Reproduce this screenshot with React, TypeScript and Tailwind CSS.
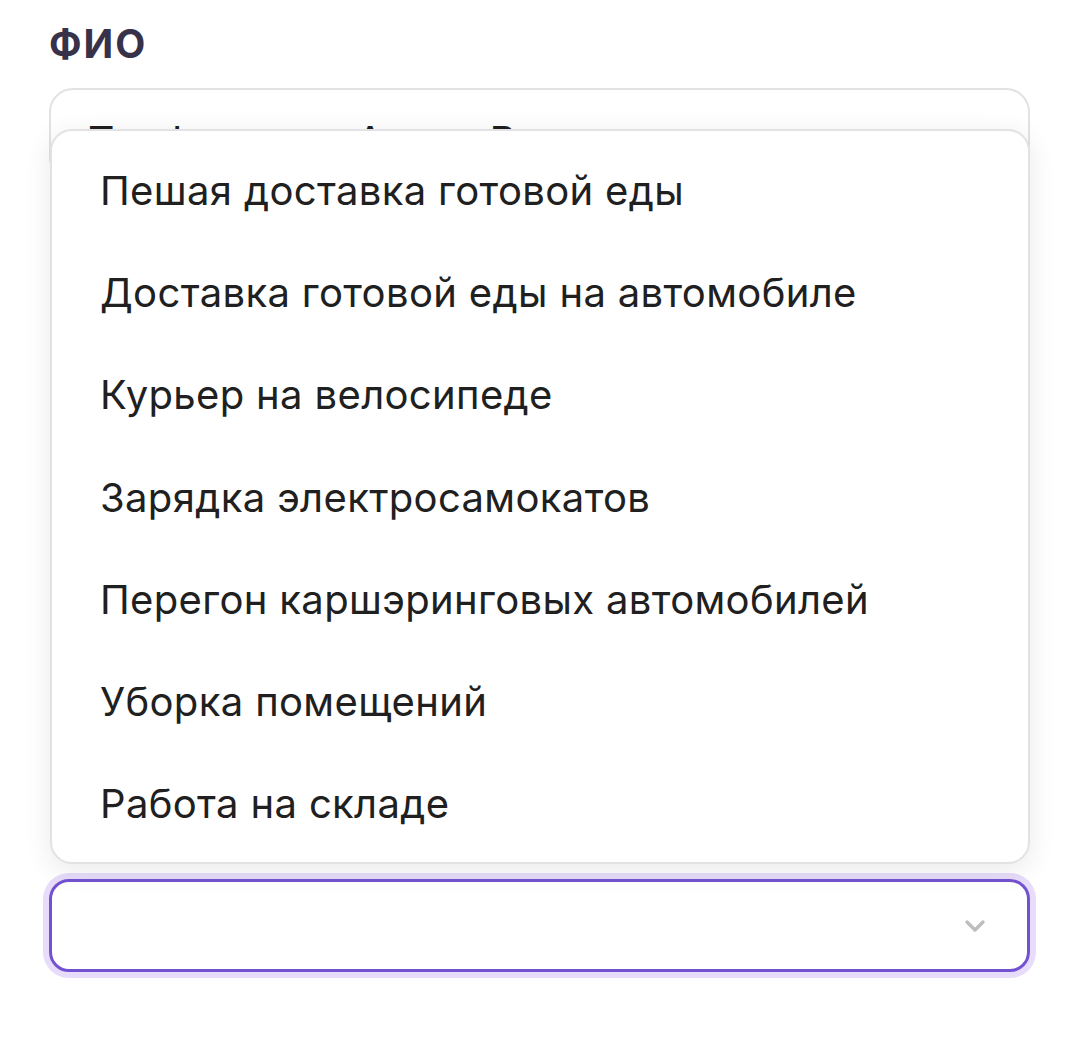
import { ChevronDown } from "lucide-react";

const options = [
  "Пешая доставка готовой еды",
  "Доставка готовой еды на автомобиле",
  "Курьер на велосипеде",
  "Зарядка электросамокатов",
  "Перегон каршэринговых автомобилей",
  "Уборка помещений",
  "Работа на складе",
];

export default function App() {
  return (
    <div className="min-h-[1045px] w-[1080px] bg-white font-['Inter',sans-serif]">
      <div className="relative flex flex-col px-[49px] pr-[50px] pt-[22px]">
        <label className="text-[39px] font-bold leading-[44px] tracking-[2px] text-[#37314a]">ФИО</label>

        <div className="mt-[22px] flex h-[93px] items-center rounded-[24px] border-2 border-[#e2e2e4] px-[37px]">
          <span className="mt-[14px] text-[41px] tracking-[0.4px] text-[#1f1f1f]">Трофименко Антон Владимирович</span>
        </div>

        {/* fields hidden beneath the open menu */}
        <div className="h-[698px]" />

        <div className="flex h-[93px] items-center justify-end rounded-[20px] border-[3px] border-[#7352d1] pr-[36px] shadow-[0_0_0_6px_#e7ddfa]">
          <ChevronDown className="h-[32px] w-[32px] text-[#bdbdc0]" strokeWidth={2.5} />
        </div>

        {/* open menu */}
        <ul className="absolute left-[50px] right-[50px] top-[129px] flex flex-col rounded-[22px] border-2 border-[#e2e2e4] bg-white pb-[7px] pt-[9px] shadow-[0_6px_28px_rgba(0,0,0,0.09)]">
          {options.map((o) => (
            <li key={o} className="flex h-[102.2px] items-center px-[48px] text-[40px] tracking-[0.35px] text-[#202020]">
              {o}
            </li>
          ))}
        </ul>
      </div>
    </div>
  );
}
